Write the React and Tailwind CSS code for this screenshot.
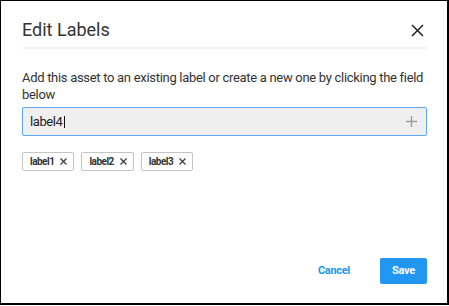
import React, { useState } from 'react';

const EditLabelsDialog = () => {
  const [labels] = useState(['label1', 'label2', 'label3']);
  const [value] = useState('label4');

  return (
    <div className="w-[449px] h-[306px] bg-white" style={{ fontFamily: 'Roboto, sans-serif' }}>
      <div className="w-[449px] h-[305px] border border-black border-r-2 border-b-2 bg-white flex flex-col pl-[21px] pr-[20px]">
        <div className="flex items-center justify-between pt-[17px] pb-[5px] border-b-2 border-[#f2f2f2]">
          <h1 className="text-[18px] leading-[24px] text-[#333] font-normal">Edit Labels</h1>
          <svg width="13" height="13" viewBox="0 0 13 13" className="mr-[3px]">
            <path d="M1 1L12 12M12 1L1 12" stroke="#222" strokeWidth="1.5" />
          </svg>
        </div>

        <p className="mt-[20px] text-[13px] leading-[17px] tracking-[-0.3px] text-[#333]">
          Add this asset to an existing label or create a new one by clicking the field below
        </p>

        <div className="mt-[4px] h-[29px] flex items-center justify-between bg-[#efefef] border border-[#5aa9f2] rounded-[2px] pl-[7px] pr-[9px]">
          <span className="text-[13px] tracking-[-0.4px] text-[#222] flex items-center">
            {value}
            <span className="inline-block w-[1px] h-[12px] bg-[#111] ml-[1px]" />
          </span>
          <svg width="11" height="11" viewBox="0 0 11 11">
            <path d="M5.5 0V11M0 5.5H11" stroke="#9a9a9a" strokeWidth="1.4" />
          </svg>
        </div>

        <div className="mt-[16px] flex gap-[7px]">
          {labels.map((l) => (
            <div
              key={l}
              className="h-[19px] flex items-center gap-[6px] pl-[7px] pr-[6px] border border-[#c4c4c4] rounded-[2px] text-[10px] font-bold tracking-[-0.5px] text-[#333]"
            >
              {l}
              <svg width="7" height="7" viewBox="0 0 7 7">
                <path d="M0.5 0.5L6.5 6.5M6.5 0.5L0.5 6.5" stroke="#333" strokeWidth="1.1" />
              </svg>
            </div>
          ))}
        </div>

        <div className="mt-auto mb-[19px] flex items-center justify-end gap-[30px]">
          <button className="text-[11px] font-bold tracking-[-0.3px] text-[#2196f3]">Cancel</button>
          <button className="w-[47px] h-[26px] bg-[#2196f3] text-white text-[11px] font-bold tracking-[-0.2px] rounded-[2px]">
            Save
          </button>
        </div>
      </div>
    </div>
  );
};

export default function App() {
  return <EditLabelsDialog />;
}
